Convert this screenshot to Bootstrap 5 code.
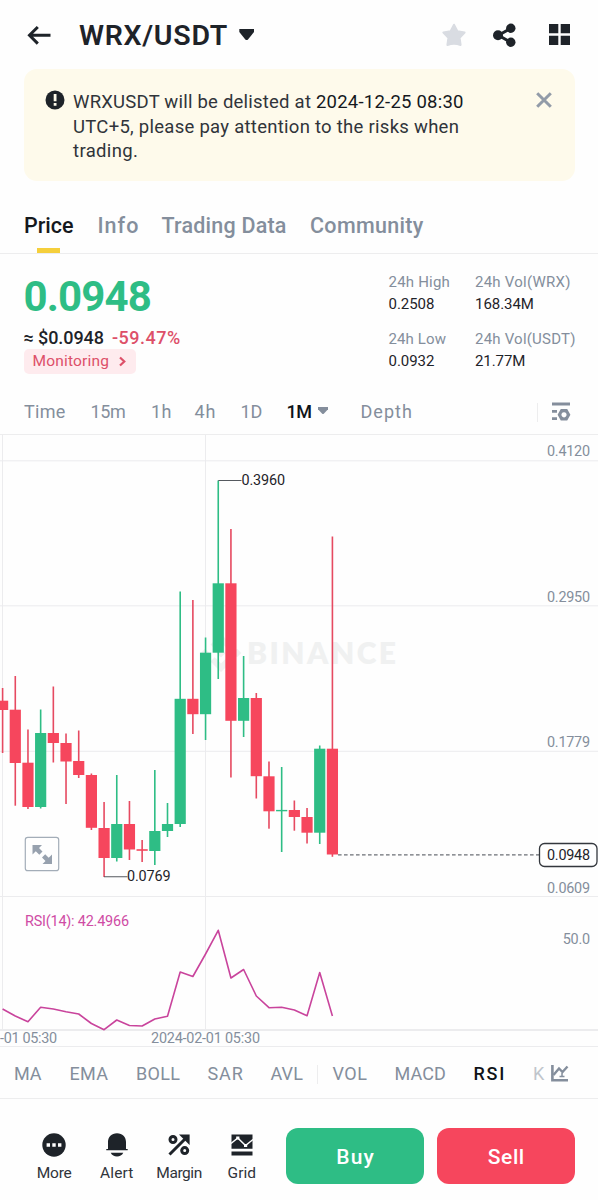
<!DOCTYPE html>
<html lang="en">
<head>
<meta charset="utf-8">
<meta name="viewport" content="width=device-width, initial-scale=1">
<title>WRX/USDT</title>
<link href="https://cdn.jsdelivr.net/npm/bootstrap@5.3.0/dist/css/bootstrap.min.css" rel="stylesheet">
<style>
  :root { --ink:#1e2329; --muted-ink:#848e9c; --up:#2ebd85; --down:#f6465d; --rule:#ededee; }
  body { font-family: Roboto, "Liberation Sans", sans-serif; color: var(--ink); background:#fefefe; width:598px; height:1200px; overflow:hidden; }
  svg { display:block; flex:none; }
  span, button { white-space:nowrap; }
  .dim { color: var(--muted-ink); }
  .topbar { height:69px; padding:0 27px 0 26px; }
  .pair { font-size:28.5px; font-weight:600; line-height:69px; margin-left:27px; padding-top:2px; width:149px; }
  .notice { margin:0 23.5px; height:112px; border-radius:13px; background:#fefaeb; padding:21px 22px 0 21px; color:#30343a; font-size:18.5px; line-height:24.5px; }
  .notice b { font-weight:400; color:#15181d; }
  .tabs { margin-top:14px; height:59px; padding-left:24px; border-bottom:1px solid var(--rule); display:grid; grid-template-columns:73.5px 64px 148.5px 120px; font-size:21.5px; font-weight:500; line-height:61px; }
  .tabs .on { color:#15181d; position:relative; }
  .tabs .on::after { content:""; position:absolute; left:12.5px; bottom:3px; width:23.5px; height:5px; background:#f5cf3c; }
  .quote { height:135px; padding-left:23.5px; }
  .last { font-size:42px; font-weight:700; line-height:50px; color:var(--up); margin-top:18px; width:140px; }
  .approx { font-size:18px; line-height:22px; font-weight:500; margin-top:5px; height:22px; }
  .chip { width:112.5px; height:25px; border-radius:5px; background:#feebee; color:#dd5069; font-size:15.5px; line-height:25px; padding:0 9px; }
  .stats { display:grid; grid-template-columns:86.5px 110px; grid-template-rows:22px 35px 22px 22px; font-size:15px; line-height:22px; margin-top:17px; width:209.5px; color:#1e2329; }
  .frames { height:46px; border-bottom:1px solid var(--rule); display:grid; grid-template-columns:66.5px 60.5px 43.5px 46px 46px 74px 176.5px 1fr; padding:0 0 0 24px; font-size:18px; line-height:46px; }
  .frames .on, .inds .on { color:#0f1318; font-weight:500; }
  .vr-thin { width:1px; height:19px; background:var(--rule); }
  .inds { height:52px; border-bottom:1px solid var(--rule); display:grid; grid-template-columns:55.5px 66.5px 71.5px 63px 46.5px 15.5px 62px 79px 59.5px 17px 1fr; padding-left:14px; font-size:18px; line-height:54px; }
  .actions { height:101px; padding:29px 23px 0 23px; }
  .tool { width:62.5px; padding-top:5px; font-size:15.5px; line-height:20px; color:#30343a; }
  .tool .lbl { margin-top:6px; }
  .trade { width:138px; height:56px; border-radius:12px; color:#fff; font-size:21px; font-weight:500; padding:4px 0 0; border:0; }
  .buy, .buy:hover { background:var(--up); color:#fff; }
  .sell, .sell:hover { background:var(--down); color:#fff; margin-left:13px; }
  .chart text { font-family: Roboto, sans-serif; font-size:14.4px; fill:#848e9c; }
  .chart .tag { fill:#1e2329; }
</style>
</head>
<body>
<header class="topbar d-flex align-items-center">
  <svg width="26" height="20" viewBox="26 24 26 20" fill="none" stroke="#1e2329" stroke-width="3"><path d="M50.5 34.3H29.5M37.8 26L29.5 34.3L37.8 42.6"/></svg>
  <span class="pair" data-w="149">WRX/USDT</span>
  <svg width="17" height="14" viewBox="239 28 17 14" style="margin-left:11px"><path d="M240.3 29H255V32L249 39.4Q247.7 40.8 246.3 39.4L240.3 32Z" fill="#1e2329"/></svg>
  <svg class="ms-auto" width="24" height="24" viewBox="0 0 24 24"><path d="M12 1.700L15.400 8.200L22.600 9.500L17.600 14.800L18.600 22Q12 19.400 5.400 22L6.400 14.800L1.400 9.500L8.600 8.200Z" fill="#d9dce2" stroke="#d9dce2" stroke-width="2" stroke-linejoin="round"/></svg>
  <svg width="25" height="26" viewBox="492 21 25 26" style="margin-left:26px" fill="#1e2329"><path d="M510.5 27.5L498.5 34.3L510.5 41.2" fill="none" stroke="#1e2329" stroke-width="3"/><circle cx="510.8" cy="27.3" r="4.7"/><circle cx="498" cy="34.3" r="5"/><circle cx="510.8" cy="41.3" r="4.7"/></svg>
  <svg width="23" height="23" viewBox="0 0 23 23" style="margin-left:31px" fill="#1e2329"><path d="M1 1h9.3v9.3H1zM12.7 1H22v9.3h-9.3zM1 12.7h9.3V22H1zM12.7 12.7H22V22h-9.3z"/></svg>
</header>

<section class="notice d-flex">
  <svg width="20" height="20" viewBox="0 0 20 20"><circle cx="10" cy="10" r="9.5" fill="#1e2329"/><path d="M8.7 4h2.8v7.2H8.7zM8.7 13h2.8v2.8H8.7z" fill="#fefaeb"/></svg>
  <div class="d-flex flex-column align-items-start" style="margin-left:8.5px">
    <span data-w="391">WRXUSDT will be delisted at <b>2024-12-25 08:30</b></span>
    <span data-w="386.5">UTC+5, please pay attention to the risks when</span>
    <span data-w="65.500">trading.</span>
  </div>
  <svg class="ms-auto" width="18" height="18" viewBox="0 0 18 18" style="margin-top:1px"><path d="M2.2 2.2L15.8 15.8M15.8 2.2L2.2 15.8" stroke="#929ba8" stroke-width="3"/></svg>
</section>

<nav class="tabs dim">
  <div class="on"><span data-w="50">Price</span></div><div><span data-w="41.5">Info</span></div><div><span data-w="125.5">Trading Data</span></div><div><span data-w="114">Community</span></div>
</nav>

<section class="quote d-flex">
  <div class="flex-grow-1">
    <div class="last"><span data-w="129">0.0948</span></div>
    <div class="approx d-flex"><span data-w="81">≈ $0.0948</span><span data-w="69" style="margin-left:8px;color:#dd5069">-59.47%</span></div>
    <div class="chip d-flex align-items-center"><span data-w="77">Monitoring</span><svg class="ms-auto" width="9" height="11" viewBox="0 0 9 11"><path d="M2 1.5L6.3 5.5L2 9.5" fill="none" stroke="#dd5069" stroke-width="2.2"/></svg></div>
  </div>
  <div class="stats">
    <div class="dim"><span data-w="62">24h High</span></div><div class="dim"><span data-w="96">24h Vol(WRX)</span></div>
    <div><span data-w="46.5">0.2508</span></div><div><span data-w="59.5">168.34M</span></div>
    <div class="dim"><span data-w="58">24h Low</span></div><div class="dim"><span data-w="101">24h Vol(USDT)</span></div>
    <div><span data-w="46.5">0.0932</span></div><div><span data-w="51">21.77M</span></div>
  </div>
</section>

<nav class="frames dim">
  <div><span data-w="42">Time</span></div><div><span data-w="36">15m</span></div><div><span data-w="21">1h</span></div><div><span data-w="21.5">4h</span></div><div><span data-w="22.5">1D</span></div>
  <div class="on d-flex align-items-center"><span data-w="26">1M</span><svg width="12" height="10" viewBox="0 0 12 10" style="margin-left:5.5px;margin-top:-2px"><path d="M1 1H11V3.2L7 7.6Q6 8.6 5 7.6L1 3.2Z" fill="#848e9c"/></svg></div>
  <div><span data-w="52">Depth</span></div>
  <div class="d-flex align-items-center"><i class="vr-thin"></i><svg width="20" height="20" viewBox="551 401 20 20" style="margin-left:13px;margin-top:-1px" fill="#848e9c"><path d="M552 401.5h18v3h-18zM552 409h5v2.8h-5zM552 416.3h5v2.8h-5z"/><path fill-rule="evenodd" d="M560.8 408h6.4l3.2 5.8-3.2 5.8h-6.4l-3.2-5.8zM564 411.2a2.6 2.6 0 1 0 .01 0z"/></svg></div>
</nav>

<svg class="chart" width="598" height="612" viewBox="0 435 598 612">
  <g stroke="#ececee" stroke-width="1"><path d="M2.5 435V1030M205.5 435V1030M0 460.800H598M0 605.800H598M0 751.300H598M0 896.500H598"/><path d="M0 1030H598" stroke-width="1.8"/><path d="M0 1046.5H598"/></g>
  <g fill="#f0f1f1">
    <path d="M221 634l10.5 10.5-4.2 4.2-6.3-6.3-6.3 6.3-4.2-4.2zM221 672l10.5-10.5-4.2-4.2-6.3 6.3-6.3-6.3-4.2 4.2zM221 648.5l4.5 4.5-4.5 4.5-4.5-4.5zM237 648.8l4.2 4.2-4.2 4.2-4.2-4.2zM205 648.8l4.2 4.2-4.2 4.2-4.2-4.2z"/>
    <text x="247" y="663.5" textLength="149" style="font-family:Lato,sans-serif;font-weight:800;font-size:30px;fill:#f0f1f1">BINANCE</text>
  </g>
  <g id="candles"></g>
  <path d="M338 854.9H539" stroke="#6b6f75" stroke-width="1.4" stroke-dasharray="3.6 2.4" fill="none"/>
  <path d="M218.3 480.5H241.5M104 876.8H127.5" stroke="#55595f" stroke-width="1.1"/>
  <text class="tag" x="241.5" y="485" textLength="43.5">0.3960</text>
  <text class="tag" x="127" y="881.3" textLength="43.5">0.0769</text>
  <text x="547" y="456.3" textLength="43">0.4120</text>
  <text x="547" y="601.6" textLength="43">0.2950</text>
  <text x="547" y="747.2" textLength="43">0.1779</text>
  <text x="547" y="892.5" textLength="43">0.0609</text>
  <text x="562.7" y="943.5" textLength="27.5">50.0</text>
  <rect x="539.5" y="843.5" width="57.5" height="23" rx="5" fill="#fefefe" stroke="#33373d" stroke-width="1.3"/>
  <text class="tag" x="547" y="860" textLength="43">0.0948</text>
  <rect x="25.3" y="837.3" width="33.4" height="33.4" rx="2.5" fill="#fefefe" stroke="#a3adb8" stroke-width="1.2"/>
  <path d="M32.5 845h9.5l-3 3 3.5 3.5-3.2 3.2-3.500-3.500-3.300 3.300zM52 864h-9.500l3-3-3.500-3.500 3.200-3.200 3.500 3.500 3.300-3.300z" fill="#97a1ae"/>
  <polyline id="rsi" fill="none" stroke="#c9449c" stroke-width="1.6" stroke-linejoin="round"/>
  <text x="25" y="926" textLength="104" style="fill:#cf4ba4">RSI(14): 42.4966</text>
  <text x="0" y="1042.8" textLength="57">-01 05:30</text>
  <text x="151" y="1042.8" textLength="109">2024-02-01 05:30</text>
</svg>

<nav class="inds dim">
  <div><span data-w="28">MA</span></div><div><span data-w="39">EMA</span></div><div><span data-w="44.5">BOLL</span></div><div><span data-w="36">SAR</span></div><div><span data-w="33">AVL</span></div>
  <div class="d-flex align-items-center"><i class="vr-thin"></i></div>
  <div><span data-w="35">VOL</span></div><div><span data-w="52">MACD</span></div><div class="on"><span data-w="31.5">RSI</span></div><div style="opacity:.5"><span>K</span></div>
  <div class="d-flex align-items-center"><svg width="18" height="18" viewBox="552 1063 18 18" fill="none" stroke="#848e9c" style="margin-left:1px;margin-top:-3px"><path d="M553.4 1064V1079.3H569" stroke-width="2.6"/><path d="M554.5 1074L560 1067.5L563.5 1071L568.500 1065.500" stroke-width="2.4"/><path d="M560.500 1075.500H565.500M563 1072V1076" stroke-width="1.5"/></svg></div>
</nav>

<footer class="actions d-flex">
  <div class="tool d-flex flex-column align-items-center"><svg width="24" height="24" viewBox="0 0 24 24"><circle cx="12" cy="12" r="11.7" fill="#1e2329"/><path d="M4.600 10.300h3.400v3.400H4.600zM10.300 10.300h3.400v3.400h-3.400zM16 10.300h3.400v3.400H16z" fill="#fff"/></svg><span class="lbl" data-w="35.5">More</span></div>
  <div class="tool d-flex flex-column align-items-center"><svg width="24" height="24" viewBox="0 0 24 24" fill="#1e2329"><path d="M12 .3C6.500.3 3 4 3 9v7H1.300v1.300h21.400V16H21V9c0-5-3.500-8.700-9-8.700zM5.700 19.800h12.600c-1.300 2.600-3.500 3.700-6.300 3.700s-5-1.100-6.300-3.700z"/></svg><span class="lbl" data-w="34">Alert</span></div>
  <div class="tool d-flex flex-column align-items-center"><svg width="24" height="24" viewBox="0 0 24 24" fill="none" stroke="#1e2329" stroke-width="3"><circle cx="6" cy="6.500" r="3"/><circle cx="17.700" cy="17.600" r="3"/><path d="M2.500 21.500L18 6"/><path d="M12 1.500H22.600V12.100Z" fill="#1e2329" stroke="none"/></svg><span class="lbl" data-w="46.5">Margin</span></div>
  <div class="tool d-flex flex-column align-items-center"><svg width="24" height="24" viewBox="0 0 24 24"><path d="M1.500 1.500h21v14.300h-21zM1.500 18.500h21v4h-21z" fill="#1e2329"/><path d="M1 10.500L7.800 5L15.500 12.500L23 6.500" fill="none" stroke="#fff" stroke-width="1.500"/><path d="M6.200 3.400h3.200v3.200H6.200zM14 10.900h3.200v3.200H14z" fill="#fff"/></svg><span class="lbl" data-w="29">Grid</span></div>
  <button class="btn trade buy ms-auto"><span data-w="38">Buy</span></button>
  <button class="btn trade sell"><span data-w="37">Sell</span></button>
</footer>

<script src="https://cdn.jsdelivr.net/npm/bootstrap@5.3.0/dist/js/bootstrap.bundle.min.js"></script>
<script>
  // high, body top, body bottom, low, direction, RSI height
  const bars = [
    [688,700.7,710,753,0,1009],[676,709.7,763,805.7,0,1016],[729.5,762.7,807,809,0,1021.7],[709.5,733,807,808.5,1,1007.3],
    [686.5,733,743,762.5,0,1009],[733.5,743,761.5,804,0,1011.7],[730.5,761,775,778,0,1014],[773.5,775,827.8,830,0,1023.5],
    [802,828,858,877,0,1029.7],[775,824,858,861.5,1,1020],[801,824,849.5,860,0,1025.5],[840,849.2,850.8,862,0,1026],
    [770,831,851,865,1,1019],[803,824,831,837,1,1016.3],[591.5,698.8,824,827,1,972],[600,698.8,714.2,734,0,976.5],
    [637.5,652.7,714.2,740,1,954],[480.5,583.3,652.7,679,1,930.3],[529,583.3,720.8,777.5,0,978],[656,698,720.8,737,1,969.5],
    [693,698,776.2,798.5,0,996],[761.5,776.3,811.3,828.7,0,1007.7],[767,809.9,811.3,852,1,1007.3],[800.5,810,817,830.7,0,1010],
    [808,817,832.7,843.5,0,1015.7],[745.5,748.7,832.7,844,1,972.5],[536.5,748.7,854.5,856.8,0,1016]
  ];
  const x = i => 2.6 + i * 12.685;
  document.getElementById('candles').innerHTML = bars.map((b, i) => {
    const c = b[4] ? '#2ebd85' : '#f6465d';
    return `<rect x="${x(i)-.8}" y="${b[0]}" width="1.6" height="${b[3]-b[0]}" fill="${b[4] ? '#2ebd85' : '#e64a61'}"/><rect x="${x(i)-5.6}" y="${b[1]}" width="11.2" height="${b[2]-b[1]}" fill="${c}"/>`;
  }).join('');
  document.getElementById('rsi').setAttribute('points', bars.map((b, i) => x(i) + ',' + b[5]).join(' '));
  // track each label to its nominal width
  document.querySelectorAll('[data-w]').forEach(e => {
    const r = document.createRange(); r.selectNodeContents(e);
    const gap = (e.dataset.w - .6 - r.getBoundingClientRect().width) / (e.textContent.length - 1);
    e.style.letterSpacing = gap + 'px';
    e.style.marginRight = -gap + 'px';
  });
</script>
</body>
</html>
